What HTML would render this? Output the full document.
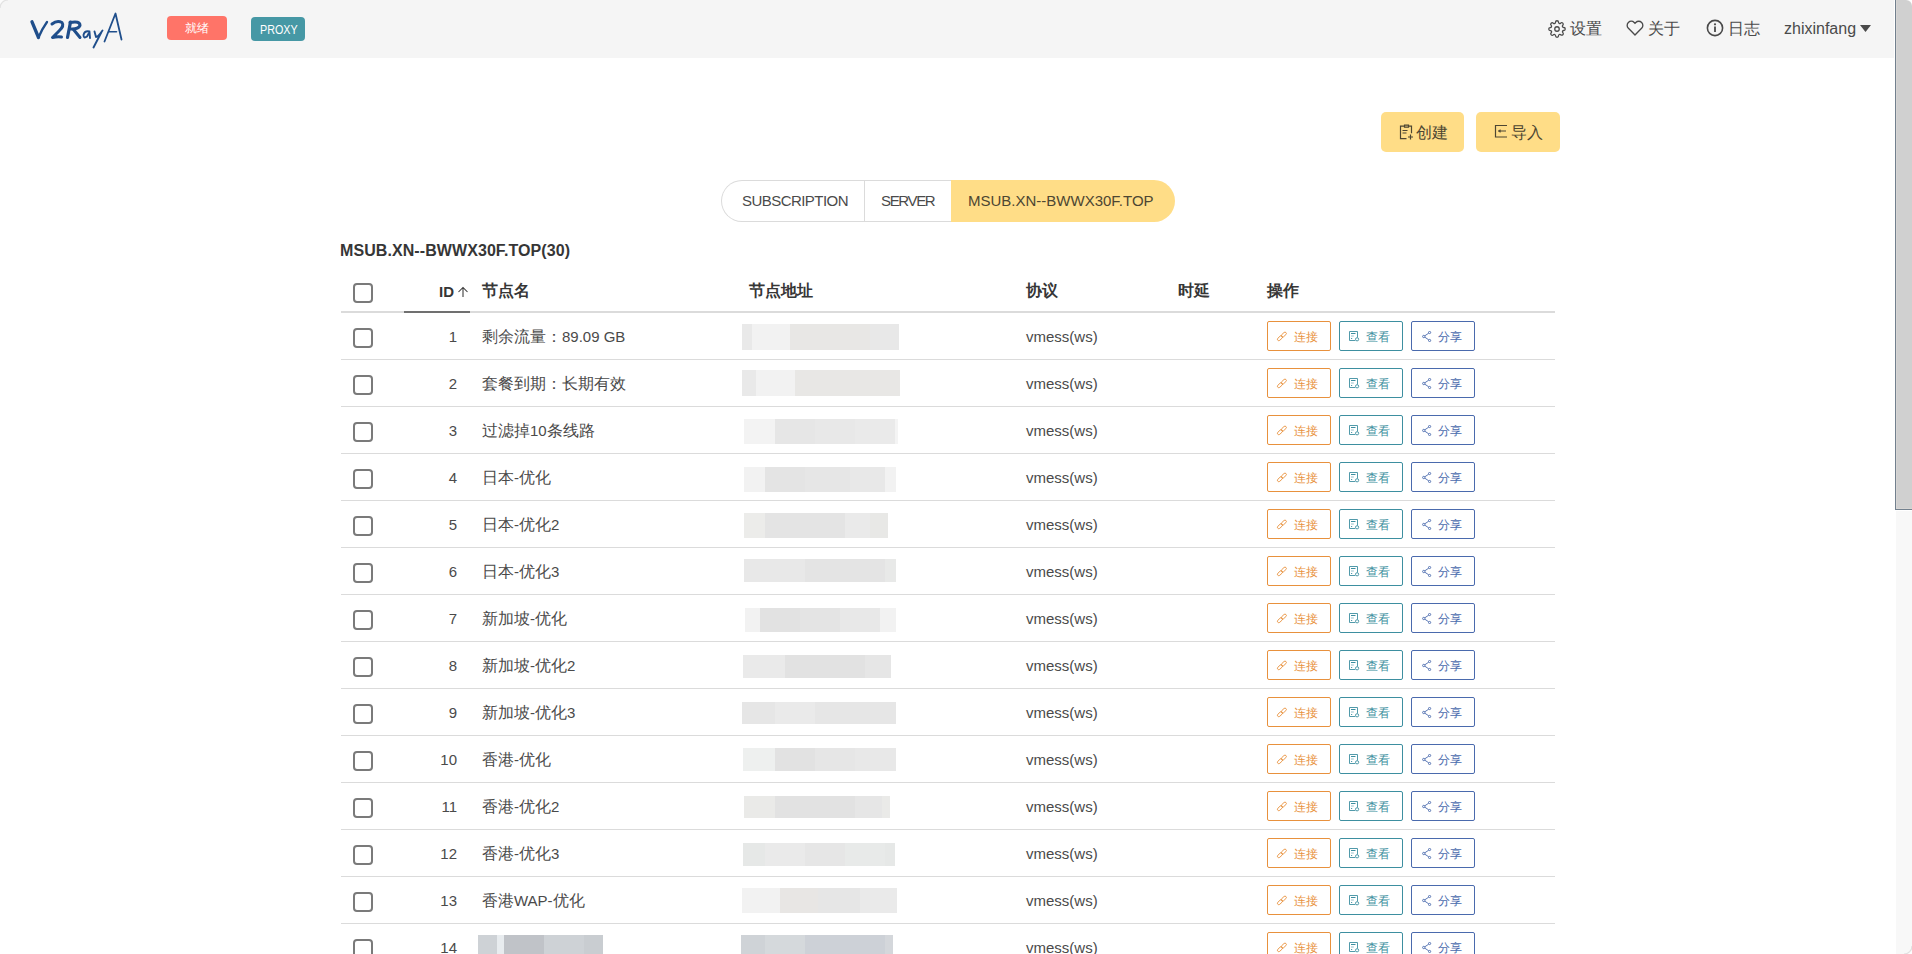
<!DOCTYPE html><html><head><meta charset="utf-8"><style>
*{box-sizing:border-box;margin:0;padding:0}
html,body{width:1912px;height:954px;overflow:hidden;background:#fff;font-family:"Liberation Sans",sans-serif;color:#4a4a4a}
.abs{position:absolute}
#hdr{position:absolute;left:0;top:0;width:1894px;height:58px;background:#f5f5f5}
.corner{position:absolute;left:0;top:0;width:14px;height:14px;border-top-left-radius:7px;border-left:1px solid #e4e4e4;border-top:1px solid #e4e4e4}
.tag{position:absolute;height:24px;border-radius:4px;color:#fff;font-size:12px;line-height:24px;text-align:center}
.nav{position:absolute;top:19px;font-size:16px;line-height:20px;color:#4a4a4a;white-space:nowrap}
.sbw{position:absolute;left:1894px;top:0;width:18px;height:954px;background:#fff}
.track{position:absolute;left:1896px;top:511px;width:16px;height:443px;background:#f8f8f8;border-bottom-right-radius:7px}
.thumb{position:absolute;left:1895px;top:0;width:17px;height:510px;background:#d0d0d0;border-left:1px solid #72808e;border-bottom:1px solid #72808e;border-top-right-radius:6px;box-shadow:inset 1px -1px 0 #d8d6d4}
.ybtn{position:absolute;top:112px;height:40px;background:#ffdd87;border-radius:5px;color:#4d4632;font-size:16px;line-height:40px}
.tabs{position:absolute;left:721px;top:180px;height:42px;width:260px;border:1px solid #dbdbdb;border-right:none;border-radius:21px 0 0 21px}
.tab{position:absolute;top:0;height:40px;line-height:40px;font-size:15px;color:#4a4a4a;white-space:nowrap}
.tabact{position:absolute;left:951px;top:180px;width:224px;height:42px;background:#ffdd87;border-radius:0 21px 21px 0;color:#4d4632;font-size:15px;line-height:42px;white-space:nowrap}
.title{position:absolute;left:340px;top:241px;letter-spacing:0.08px;font-size:16px;font-weight:bold;color:#363636;line-height:20px;white-space:nowrap}
.th{position:absolute;top:281px;font-size:16px;font-weight:bold;color:#363636;line-height:20px;white-space:nowrap}
.hline{position:absolute;left:341px;top:311px;width:1214px;height:2px;background:#dbdbdb}
.sortline{position:absolute;left:404px;top:311px;width:66px;height:2px;background:#707070}
.row{position:absolute;left:341px;width:1214px;height:47px;border-bottom:1px solid #dbdbdb}
.cb{position:absolute;left:12px;width:20px;height:20px;border:2px solid #7a7a7a;border-radius:4px;background:#fff}
.id{position:absolute;right:1098px;font-size:15px;line-height:20px;color:#4a4a4a;text-align:right}
.nm{position:absolute;left:141px;font-size:15px;line-height:20px;color:#4a4a4a;white-space:nowrap}
.cj{font-size:16px}
.pr{position:absolute;left:685px;font-size:15px;line-height:20px;color:#4a4a4a}
.bl{position:absolute}
.btn{position:absolute;top:8px;width:64px;height:30px;border:1px solid;border-radius:2px;font-size:12px;line-height:28px;background:#fff;white-space:nowrap}
.b1{left:926px;border-color:#e8913d;color:#e8913d}
.b2{left:998px;border-color:#3d8fa0;color:#3d8fa0}
.b3{left:1070px;border-color:#4a6aad;color:#4a6aad}
.btn svg{position:absolute}
.btn span{position:absolute;left:26px;top:1px}
</style></head><body>
<div id="hdr"></div><svg class="abs" style="left:0;top:0" width="10" height="10" viewBox="0 0 10 10"><path d="M0 0H8A8 8 0 0 0 0 8z" fill="#fbfbfb"/><path d="M0 8A8 8 0 0 1 8 0" fill="none" stroke="#e2e2e2" stroke-width="1.2"/></svg>
<svg class="abs" style="left:28px;top:10px" width="100" height="42" viewBox="0 0 100 42">
<g fill="none" stroke="#1f4e8b" stroke-linecap="round" stroke-linejoin="round">
<path d="M4 11.8 Q7 19 10.5 27.5" stroke-width="3.3"/><path d="M10.5 27.5 Q14 19 19 12" stroke-width="2.3"/>
<path d="M24 14 Q29 10 34 12.5 Q36.5 16 31 21 L24.5 27.5 Q29 26.5 33.5 27" stroke-width="3"/>
<path d="M42.5 12 L39.5 27.5" stroke-width="3.2"/>
<path d="M42 12.5 Q52 10.5 52 15.5 Q50 19.5 43 19" stroke-width="3"/>
<path d="M45.5 19.5 L52 27.5" stroke-width="3"/>
<path d="M61.5 21.5 Q56.5 20.5 55.5 25 Q55.5 29 59 26.5 L61.5 22 L62 28" stroke-width="1.9"/>
<path d="M66.5 21.5 L68 27 Q70 27 74.5 20.5 M73.5 22 L65.5 37.5" stroke-width="1.9"/>
<path d="M76.5 31.5 L87.5 3.5 L93.5 29.5" stroke-width="1.8"/>
<path d="M81 21.7 L88.5 21.7" stroke-width="1.6"/>
</g></svg>
<div class="tag" style="left:167px;top:16px;width:60px;background:#ff7468;line-height:25px">就绪</div>
<div class="tag" style="left:251px;top:17px;width:54px;background:#4698a5;font-size:12.5px;line-height:26px;padding-left:2px"><span style="display:inline-block;transform:scaleX(0.86)">PROXY</span></div>
<div class="nav" style="left:1570px"><svg width="18" height="18" viewBox="0 0 24 24" style="position:absolute;left:-22px;top:1px" fill="none" stroke="#4a4a4a" stroke-width="1.7"><circle cx="12" cy="12" r="3"/><path d="M19.4 15a1.65 1.65 0 0 0 .33 1.82l.06.06a2 2 0 1 1-2.83 2.830l-.06-.06a1.65 1.65 0 0 0-1.82-.33 1.65 1.65 0 0 0-1 1.51V21a2 2 0 1 1-4 0v-.09A1.65 1.65 0 0 0 9 19.4a1.65 1.65 0 0 0-1.82.33l-.06.06a2 2 0 1 1-2.83-2.83l.06-.06a1.65 1.65 0 0 0 .33-1.82 1.65 1.65 0 0 0-1.51-1H3a2 2 0 1 1 0-4h.09A1.65 1.65 0 0 0 4.6 9a1.65 1.65 0 0 0-.33-1.82l-.06-.06a2 2 0 1 1 2.83-2.83l.06.06a1.65 1.65 0 0 0 1.82.33H9a1.65 1.65 0 0 0 1-1.51V3a2 2 0 1 1 4 0v.09a1.65 1.65 0 0 0 1 1.51 1.65 1.65 0 0 0 1.82-.33l.06-.06a2 2 0 1 1 2.83 2.83l-.06.06a1.65 1.65 0 0 0-.33 1.82V9a1.65 1.65 0 0 0 1.51 1H21a2 2 0 1 1 0 4h-.09a1.65 1.65 0 0 0-1.51 1z"/></svg>设置</div>
<div class="nav" style="left:1648px"><svg width="18" height="18" viewBox="0 0 24 24" style="position:absolute;left:-22px;top:0px" fill="none" stroke="#4a4a4a" stroke-width="1.8"><path d="M20.84 4.61a5.5 5.5 0 0 0-7.78 0L12 5.67l-1.06-1.06a5.5 5.5 0 0 0-7.78 7.78l1.06 1.06L12 21.23l7.78-7.780 1.06-1.06a5.5 5.5 0 0 0 0-7.78z"/></svg>关于</div>
<div class="nav" style="left:1728px"><svg width="18" height="18" viewBox="0 0 18 18" style="position:absolute;left:-22px;top:0px" fill="none" stroke="#4a4a4a"><circle cx="9" cy="9" r="7.6" stroke-width="1.6"/><circle cx="9" cy="5.3" r="1.1" fill="#4a4a4a" stroke="none"/><path d="M9 7.5v5.5" stroke-width="1.8"/></svg>日志</div>
<div class="nav" style="left:1784px">zhixinfang<svg width="12" height="8" viewBox="0 0 12 8" style="position:absolute;left:76px;top:6px"><path d="M0 0H11L5.5 7z" fill="#4a4a4a"/></svg></div>
<div class="sbw"></div><div class="track"></div><div class="thumb"></div>
<div class="ybtn" style="left:1381px;width:83px"><svg width="15" height="16" viewBox="0 0 15 16" style="position:absolute;left:18px;top:12px" fill="none" stroke="#4d4632" stroke-width="1.2"><path d="M5.5 1.2h4v2h-4z M5.5 2.2H1.5v12.5h6 M9.5 2.2h3v7 M3.5 6.5h5 M3.5 9h4 M11.5 10.5v5 M9 13h5"/></svg><span style="position:absolute;left:35px;top:1px">创建</span></div>
<div class="ybtn" style="left:1476px;width:84px"><svg width="15" height="16" viewBox="0 0 15 16" style="position:absolute;left:18px;top:12px" fill="none" stroke="#4d4632" stroke-width="1.2"><path d="M13 1.5H1.5v11.5H13 M4.5 7h7.5"/><path d="M4.3 7l2-1.3v2.6z" fill="#4d4632" stroke-width="0.6"/></svg><span style="position:absolute;left:35px;top:1px">导入</span></div>
<div class="tabs"><div class="tab" style="left:20px;font-size:15px;letter-spacing:-0.55px">SUBSCRIPTION</div><div style="position:absolute;left:142px;top:0;width:1px;height:40px;background:#dbdbdb"></div><div class="tab" style="left:159px;letter-spacing:-1.35px">SERVER</div></div>
<div class="tabact"><span style="position:absolute;left:17px;top:0">MSUB.XN--BWWX30F.TOP</span></div>
<div class="title">MSUB.XN--BWWX30F.TOP(30)</div>
<div class="cb abs" style="left:353px;top:283px"></div>
<div class="th" style="left:439px;font-size:15px;top:282px">ID</div>
<svg class="abs" style="left:457px;top:286px" width="12" height="12" viewBox="0 0 12 12" fill="none" stroke="#363636" stroke-width="1.05"><path d="M6 11V1.5 M1.5 6L6 1.5L10.5 6"/></svg>
<div class="th" style="left:482px">节点名</div>
<div class="th" style="left:749px">节点地址</div>
<div class="th" style="left:1026px">协议</div>
<div class="th" style="left:1178px">时延</div>
<div class="th" style="left:1267px">操作</div>
<div class="hline"></div><div class="sortline"></div>
<div class="row" style="top:313px">
<div class="cb" style="top:15px"></div>
<div class="id" style="top:14px">1</div>
<div class="nm" style="top:14px"><span class="cj">剩余流量：</span>89.09 GB</div>
<div class="pr" style="top:14px">vmess(ws)</div>
<div class="btn b1"><svg style="left:8px;top:9px" width="12" height="12" viewBox="0 0 12 12" fill="none" stroke="currentColor" stroke-width="0.85"><g transform="rotate(-43 5.9 5.4)"><rect x="0.3" y="4" width="6" height="2.8" rx="1.4"/><rect x="5.5" y="4" width="6" height="2.8" rx="1.4"/></g></svg><span>连接</span></div>
<div class="btn b2"><svg style="left:9px;top:9px" width="12" height="12" viewBox="0 0 12 12" fill="none" stroke="currentColor" stroke-width="0.9"><path d="M6.3 9.5H0.5V0.5h8v6"/><path d="M2 2.5h4.5" stroke-width="1"/><path d="M2 5h2.8" opacity=".45" stroke-width="1.2"/><path d="M2 7.5h1.2"/><circle cx="8.1" cy="8.3" r="1.6"/></svg><span>查看</span></div>
<div class="btn b3"><svg style="left:10px;top:9px" width="11" height="11" viewBox="0 0 11 11" fill="none" stroke="currentColor" stroke-width="0.9"><circle cx="1.8" cy="5.5" r="1.2"/><circle cx="7.6" cy="1.5" r="1.1"/><circle cx="7.6" cy="9.5" r="1.1"/><path d="M2.8 4.8l3.9-2.6 M2.8 6.2l3.9 2.6"/></svg><span>分享</span></div>
</div>
<div class="row" style="top:360px">
<div class="cb" style="top:15px"></div>
<div class="id" style="top:14px">2</div>
<div class="nm" style="top:14px"><span class="cj">套餐到期：长期有效</span></div>
<div class="pr" style="top:14px">vmess(ws)</div>
<div class="btn b1"><svg style="left:8px;top:9px" width="12" height="12" viewBox="0 0 12 12" fill="none" stroke="currentColor" stroke-width="0.85"><g transform="rotate(-43 5.9 5.4)"><rect x="0.3" y="4" width="6" height="2.8" rx="1.4"/><rect x="5.5" y="4" width="6" height="2.8" rx="1.4"/></g></svg><span>连接</span></div>
<div class="btn b2"><svg style="left:9px;top:9px" width="12" height="12" viewBox="0 0 12 12" fill="none" stroke="currentColor" stroke-width="0.9"><path d="M6.3 9.5H0.5V0.5h8v6"/><path d="M2 2.5h4.5" stroke-width="1"/><path d="M2 5h2.8" opacity=".45" stroke-width="1.2"/><path d="M2 7.5h1.2"/><circle cx="8.1" cy="8.3" r="1.6"/></svg><span>查看</span></div>
<div class="btn b3"><svg style="left:10px;top:9px" width="11" height="11" viewBox="0 0 11 11" fill="none" stroke="currentColor" stroke-width="0.9"><circle cx="1.8" cy="5.5" r="1.2"/><circle cx="7.6" cy="1.5" r="1.1"/><circle cx="7.6" cy="9.5" r="1.1"/><path d="M2.8 4.8l3.9-2.6 M2.8 6.2l3.9 2.6"/></svg><span>分享</span></div>
</div>
<div class="row" style="top:407px">
<div class="cb" style="top:15px"></div>
<div class="id" style="top:14px">3</div>
<div class="nm" style="top:14px"><span class="cj">过滤掉</span>10<span class="cj">条线路</span></div>
<div class="pr" style="top:14px">vmess(ws)</div>
<div class="btn b1"><svg style="left:8px;top:9px" width="12" height="12" viewBox="0 0 12 12" fill="none" stroke="currentColor" stroke-width="0.85"><g transform="rotate(-43 5.9 5.4)"><rect x="0.3" y="4" width="6" height="2.8" rx="1.4"/><rect x="5.5" y="4" width="6" height="2.8" rx="1.4"/></g></svg><span>连接</span></div>
<div class="btn b2"><svg style="left:9px;top:9px" width="12" height="12" viewBox="0 0 12 12" fill="none" stroke="currentColor" stroke-width="0.9"><path d="M6.3 9.5H0.5V0.5h8v6"/><path d="M2 2.5h4.5" stroke-width="1"/><path d="M2 5h2.8" opacity=".45" stroke-width="1.2"/><path d="M2 7.5h1.2"/><circle cx="8.1" cy="8.3" r="1.6"/></svg><span>查看</span></div>
<div class="btn b3"><svg style="left:10px;top:9px" width="11" height="11" viewBox="0 0 11 11" fill="none" stroke="currentColor" stroke-width="0.9"><circle cx="1.8" cy="5.5" r="1.2"/><circle cx="7.6" cy="1.5" r="1.1"/><circle cx="7.6" cy="9.5" r="1.1"/><path d="M2.8 4.8l3.9-2.6 M2.8 6.2l3.9 2.6"/></svg><span>分享</span></div>
</div>
<div class="row" style="top:454px">
<div class="cb" style="top:15px"></div>
<div class="id" style="top:14px">4</div>
<div class="nm" style="top:14px"><span class="cj">日本</span>-<span class="cj">优化</span></div>
<div class="pr" style="top:14px">vmess(ws)</div>
<div class="btn b1"><svg style="left:8px;top:9px" width="12" height="12" viewBox="0 0 12 12" fill="none" stroke="currentColor" stroke-width="0.85"><g transform="rotate(-43 5.9 5.4)"><rect x="0.3" y="4" width="6" height="2.8" rx="1.4"/><rect x="5.5" y="4" width="6" height="2.8" rx="1.4"/></g></svg><span>连接</span></div>
<div class="btn b2"><svg style="left:9px;top:9px" width="12" height="12" viewBox="0 0 12 12" fill="none" stroke="currentColor" stroke-width="0.9"><path d="M6.3 9.5H0.5V0.5h8v6"/><path d="M2 2.5h4.5" stroke-width="1"/><path d="M2 5h2.8" opacity=".45" stroke-width="1.2"/><path d="M2 7.5h1.2"/><circle cx="8.1" cy="8.3" r="1.6"/></svg><span>查看</span></div>
<div class="btn b3"><svg style="left:10px;top:9px" width="11" height="11" viewBox="0 0 11 11" fill="none" stroke="currentColor" stroke-width="0.9"><circle cx="1.8" cy="5.5" r="1.2"/><circle cx="7.6" cy="1.5" r="1.1"/><circle cx="7.6" cy="9.5" r="1.1"/><path d="M2.8 4.8l3.9-2.6 M2.8 6.2l3.9 2.6"/></svg><span>分享</span></div>
</div>
<div class="row" style="top:501px">
<div class="cb" style="top:15px"></div>
<div class="id" style="top:14px">5</div>
<div class="nm" style="top:14px"><span class="cj">日本</span>-<span class="cj">优化</span>2</div>
<div class="pr" style="top:14px">vmess(ws)</div>
<div class="btn b1"><svg style="left:8px;top:9px" width="12" height="12" viewBox="0 0 12 12" fill="none" stroke="currentColor" stroke-width="0.85"><g transform="rotate(-43 5.9 5.4)"><rect x="0.3" y="4" width="6" height="2.8" rx="1.4"/><rect x="5.5" y="4" width="6" height="2.8" rx="1.4"/></g></svg><span>连接</span></div>
<div class="btn b2"><svg style="left:9px;top:9px" width="12" height="12" viewBox="0 0 12 12" fill="none" stroke="currentColor" stroke-width="0.9"><path d="M6.3 9.5H0.5V0.5h8v6"/><path d="M2 2.5h4.5" stroke-width="1"/><path d="M2 5h2.8" opacity=".45" stroke-width="1.2"/><path d="M2 7.5h1.2"/><circle cx="8.1" cy="8.3" r="1.6"/></svg><span>查看</span></div>
<div class="btn b3"><svg style="left:10px;top:9px" width="11" height="11" viewBox="0 0 11 11" fill="none" stroke="currentColor" stroke-width="0.9"><circle cx="1.8" cy="5.5" r="1.2"/><circle cx="7.6" cy="1.5" r="1.1"/><circle cx="7.6" cy="9.5" r="1.1"/><path d="M2.8 4.8l3.9-2.6 M2.8 6.2l3.9 2.6"/></svg><span>分享</span></div>
</div>
<div class="row" style="top:548px">
<div class="cb" style="top:15px"></div>
<div class="id" style="top:14px">6</div>
<div class="nm" style="top:14px"><span class="cj">日本</span>-<span class="cj">优化</span>3</div>
<div class="pr" style="top:14px">vmess(ws)</div>
<div class="btn b1"><svg style="left:8px;top:9px" width="12" height="12" viewBox="0 0 12 12" fill="none" stroke="currentColor" stroke-width="0.85"><g transform="rotate(-43 5.9 5.4)"><rect x="0.3" y="4" width="6" height="2.8" rx="1.4"/><rect x="5.5" y="4" width="6" height="2.8" rx="1.4"/></g></svg><span>连接</span></div>
<div class="btn b2"><svg style="left:9px;top:9px" width="12" height="12" viewBox="0 0 12 12" fill="none" stroke="currentColor" stroke-width="0.9"><path d="M6.3 9.5H0.5V0.5h8v6"/><path d="M2 2.5h4.5" stroke-width="1"/><path d="M2 5h2.8" opacity=".45" stroke-width="1.2"/><path d="M2 7.5h1.2"/><circle cx="8.1" cy="8.3" r="1.6"/></svg><span>查看</span></div>
<div class="btn b3"><svg style="left:10px;top:9px" width="11" height="11" viewBox="0 0 11 11" fill="none" stroke="currentColor" stroke-width="0.9"><circle cx="1.8" cy="5.5" r="1.2"/><circle cx="7.6" cy="1.5" r="1.1"/><circle cx="7.6" cy="9.5" r="1.1"/><path d="M2.8 4.8l3.9-2.6 M2.8 6.2l3.9 2.6"/></svg><span>分享</span></div>
</div>
<div class="row" style="top:595px">
<div class="cb" style="top:15px"></div>
<div class="id" style="top:14px">7</div>
<div class="nm" style="top:14px"><span class="cj">新加坡</span>-<span class="cj">优化</span></div>
<div class="pr" style="top:14px">vmess(ws)</div>
<div class="btn b1"><svg style="left:8px;top:9px" width="12" height="12" viewBox="0 0 12 12" fill="none" stroke="currentColor" stroke-width="0.85"><g transform="rotate(-43 5.9 5.4)"><rect x="0.3" y="4" width="6" height="2.8" rx="1.4"/><rect x="5.5" y="4" width="6" height="2.8" rx="1.4"/></g></svg><span>连接</span></div>
<div class="btn b2"><svg style="left:9px;top:9px" width="12" height="12" viewBox="0 0 12 12" fill="none" stroke="currentColor" stroke-width="0.9"><path d="M6.3 9.5H0.5V0.5h8v6"/><path d="M2 2.5h4.5" stroke-width="1"/><path d="M2 5h2.8" opacity=".45" stroke-width="1.2"/><path d="M2 7.5h1.2"/><circle cx="8.1" cy="8.3" r="1.6"/></svg><span>查看</span></div>
<div class="btn b3"><svg style="left:10px;top:9px" width="11" height="11" viewBox="0 0 11 11" fill="none" stroke="currentColor" stroke-width="0.9"><circle cx="1.8" cy="5.5" r="1.2"/><circle cx="7.6" cy="1.5" r="1.1"/><circle cx="7.6" cy="9.5" r="1.1"/><path d="M2.8 4.8l3.9-2.6 M2.8 6.2l3.9 2.6"/></svg><span>分享</span></div>
</div>
<div class="row" style="top:642px">
<div class="cb" style="top:15px"></div>
<div class="id" style="top:14px">8</div>
<div class="nm" style="top:14px"><span class="cj">新加坡</span>-<span class="cj">优化</span>2</div>
<div class="pr" style="top:14px">vmess(ws)</div>
<div class="btn b1"><svg style="left:8px;top:9px" width="12" height="12" viewBox="0 0 12 12" fill="none" stroke="currentColor" stroke-width="0.85"><g transform="rotate(-43 5.9 5.4)"><rect x="0.3" y="4" width="6" height="2.8" rx="1.4"/><rect x="5.5" y="4" width="6" height="2.8" rx="1.4"/></g></svg><span>连接</span></div>
<div class="btn b2"><svg style="left:9px;top:9px" width="12" height="12" viewBox="0 0 12 12" fill="none" stroke="currentColor" stroke-width="0.9"><path d="M6.3 9.5H0.5V0.5h8v6"/><path d="M2 2.5h4.5" stroke-width="1"/><path d="M2 5h2.8" opacity=".45" stroke-width="1.2"/><path d="M2 7.5h1.2"/><circle cx="8.1" cy="8.3" r="1.6"/></svg><span>查看</span></div>
<div class="btn b3"><svg style="left:10px;top:9px" width="11" height="11" viewBox="0 0 11 11" fill="none" stroke="currentColor" stroke-width="0.9"><circle cx="1.8" cy="5.5" r="1.2"/><circle cx="7.6" cy="1.5" r="1.1"/><circle cx="7.6" cy="9.5" r="1.1"/><path d="M2.8 4.8l3.9-2.6 M2.8 6.2l3.9 2.6"/></svg><span>分享</span></div>
</div>
<div class="row" style="top:689px">
<div class="cb" style="top:15px"></div>
<div class="id" style="top:14px">9</div>
<div class="nm" style="top:14px"><span class="cj">新加坡</span>-<span class="cj">优化</span>3</div>
<div class="pr" style="top:14px">vmess(ws)</div>
<div class="btn b1"><svg style="left:8px;top:9px" width="12" height="12" viewBox="0 0 12 12" fill="none" stroke="currentColor" stroke-width="0.85"><g transform="rotate(-43 5.9 5.4)"><rect x="0.3" y="4" width="6" height="2.8" rx="1.4"/><rect x="5.5" y="4" width="6" height="2.8" rx="1.4"/></g></svg><span>连接</span></div>
<div class="btn b2"><svg style="left:9px;top:9px" width="12" height="12" viewBox="0 0 12 12" fill="none" stroke="currentColor" stroke-width="0.9"><path d="M6.3 9.5H0.5V0.5h8v6"/><path d="M2 2.5h4.5" stroke-width="1"/><path d="M2 5h2.8" opacity=".45" stroke-width="1.2"/><path d="M2 7.5h1.2"/><circle cx="8.1" cy="8.3" r="1.6"/></svg><span>查看</span></div>
<div class="btn b3"><svg style="left:10px;top:9px" width="11" height="11" viewBox="0 0 11 11" fill="none" stroke="currentColor" stroke-width="0.9"><circle cx="1.8" cy="5.5" r="1.2"/><circle cx="7.6" cy="1.5" r="1.1"/><circle cx="7.6" cy="9.5" r="1.1"/><path d="M2.8 4.8l3.9-2.6 M2.8 6.2l3.9 2.6"/></svg><span>分享</span></div>
</div>
<div class="row" style="top:736px">
<div class="cb" style="top:15px"></div>
<div class="id" style="top:14px">10</div>
<div class="nm" style="top:14px"><span class="cj">香港</span>-<span class="cj">优化</span></div>
<div class="pr" style="top:14px">vmess(ws)</div>
<div class="btn b1"><svg style="left:8px;top:9px" width="12" height="12" viewBox="0 0 12 12" fill="none" stroke="currentColor" stroke-width="0.85"><g transform="rotate(-43 5.9 5.4)"><rect x="0.3" y="4" width="6" height="2.8" rx="1.4"/><rect x="5.5" y="4" width="6" height="2.8" rx="1.4"/></g></svg><span>连接</span></div>
<div class="btn b2"><svg style="left:9px;top:9px" width="12" height="12" viewBox="0 0 12 12" fill="none" stroke="currentColor" stroke-width="0.9"><path d="M6.3 9.5H0.5V0.5h8v6"/><path d="M2 2.5h4.5" stroke-width="1"/><path d="M2 5h2.8" opacity=".45" stroke-width="1.2"/><path d="M2 7.5h1.2"/><circle cx="8.1" cy="8.3" r="1.6"/></svg><span>查看</span></div>
<div class="btn b3"><svg style="left:10px;top:9px" width="11" height="11" viewBox="0 0 11 11" fill="none" stroke="currentColor" stroke-width="0.9"><circle cx="1.8" cy="5.5" r="1.2"/><circle cx="7.6" cy="1.5" r="1.1"/><circle cx="7.6" cy="9.5" r="1.1"/><path d="M2.8 4.8l3.9-2.6 M2.8 6.2l3.9 2.6"/></svg><span>分享</span></div>
</div>
<div class="row" style="top:783px">
<div class="cb" style="top:15px"></div>
<div class="id" style="top:14px">11</div>
<div class="nm" style="top:14px"><span class="cj">香港</span>-<span class="cj">优化</span>2</div>
<div class="pr" style="top:14px">vmess(ws)</div>
<div class="btn b1"><svg style="left:8px;top:9px" width="12" height="12" viewBox="0 0 12 12" fill="none" stroke="currentColor" stroke-width="0.85"><g transform="rotate(-43 5.9 5.4)"><rect x="0.3" y="4" width="6" height="2.8" rx="1.4"/><rect x="5.5" y="4" width="6" height="2.8" rx="1.4"/></g></svg><span>连接</span></div>
<div class="btn b2"><svg style="left:9px;top:9px" width="12" height="12" viewBox="0 0 12 12" fill="none" stroke="currentColor" stroke-width="0.9"><path d="M6.3 9.5H0.5V0.5h8v6"/><path d="M2 2.5h4.5" stroke-width="1"/><path d="M2 5h2.8" opacity=".45" stroke-width="1.2"/><path d="M2 7.5h1.2"/><circle cx="8.1" cy="8.3" r="1.6"/></svg><span>查看</span></div>
<div class="btn b3"><svg style="left:10px;top:9px" width="11" height="11" viewBox="0 0 11 11" fill="none" stroke="currentColor" stroke-width="0.9"><circle cx="1.8" cy="5.5" r="1.2"/><circle cx="7.6" cy="1.5" r="1.1"/><circle cx="7.6" cy="9.5" r="1.1"/><path d="M2.8 4.8l3.9-2.6 M2.8 6.2l3.9 2.6"/></svg><span>分享</span></div>
</div>
<div class="row" style="top:830px">
<div class="cb" style="top:15px"></div>
<div class="id" style="top:14px">12</div>
<div class="nm" style="top:14px"><span class="cj">香港</span>-<span class="cj">优化</span>3</div>
<div class="pr" style="top:14px">vmess(ws)</div>
<div class="btn b1"><svg style="left:8px;top:9px" width="12" height="12" viewBox="0 0 12 12" fill="none" stroke="currentColor" stroke-width="0.85"><g transform="rotate(-43 5.9 5.4)"><rect x="0.3" y="4" width="6" height="2.8" rx="1.4"/><rect x="5.5" y="4" width="6" height="2.8" rx="1.4"/></g></svg><span>连接</span></div>
<div class="btn b2"><svg style="left:9px;top:9px" width="12" height="12" viewBox="0 0 12 12" fill="none" stroke="currentColor" stroke-width="0.9"><path d="M6.3 9.5H0.5V0.5h8v6"/><path d="M2 2.5h4.5" stroke-width="1"/><path d="M2 5h2.8" opacity=".45" stroke-width="1.2"/><path d="M2 7.5h1.2"/><circle cx="8.1" cy="8.3" r="1.6"/></svg><span>查看</span></div>
<div class="btn b3"><svg style="left:10px;top:9px" width="11" height="11" viewBox="0 0 11 11" fill="none" stroke="currentColor" stroke-width="0.9"><circle cx="1.8" cy="5.5" r="1.2"/><circle cx="7.6" cy="1.5" r="1.1"/><circle cx="7.6" cy="9.5" r="1.1"/><path d="M2.8 4.8l3.9-2.6 M2.8 6.2l3.9 2.6"/></svg><span>分享</span></div>
</div>
<div class="row" style="top:877px">
<div class="cb" style="top:15px"></div>
<div class="id" style="top:14px">13</div>
<div class="nm" style="top:14px"><span class="cj">香港</span>WAP-<span class="cj">优化</span></div>
<div class="pr" style="top:14px">vmess(ws)</div>
<div class="btn b1"><svg style="left:8px;top:9px" width="12" height="12" viewBox="0 0 12 12" fill="none" stroke="currentColor" stroke-width="0.85"><g transform="rotate(-43 5.9 5.4)"><rect x="0.3" y="4" width="6" height="2.8" rx="1.4"/><rect x="5.5" y="4" width="6" height="2.8" rx="1.4"/></g></svg><span>连接</span></div>
<div class="btn b2"><svg style="left:9px;top:9px" width="12" height="12" viewBox="0 0 12 12" fill="none" stroke="currentColor" stroke-width="0.9"><path d="M6.3 9.5H0.5V0.5h8v6"/><path d="M2 2.5h4.5" stroke-width="1"/><path d="M2 5h2.8" opacity=".45" stroke-width="1.2"/><path d="M2 7.5h1.2"/><circle cx="8.1" cy="8.3" r="1.6"/></svg><span>查看</span></div>
<div class="btn b3"><svg style="left:10px;top:9px" width="11" height="11" viewBox="0 0 11 11" fill="none" stroke="currentColor" stroke-width="0.9"><circle cx="1.8" cy="5.5" r="1.2"/><circle cx="7.6" cy="1.5" r="1.1"/><circle cx="7.6" cy="9.5" r="1.1"/><path d="M2.8 4.8l3.9-2.6 M2.8 6.2l3.9 2.6"/></svg><span>分享</span></div>
</div>
<div class="row" style="top:924px">
<div class="cb" style="top:15px"></div>
<div class="id" style="top:14px">14</div>
<div class="pr" style="top:14px">vmess(ws)</div>
<div class="btn b1"><svg style="left:8px;top:9px" width="12" height="12" viewBox="0 0 12 12" fill="none" stroke="currentColor" stroke-width="0.85"><g transform="rotate(-43 5.9 5.4)"><rect x="0.3" y="4" width="6" height="2.8" rx="1.4"/><rect x="5.5" y="4" width="6" height="2.8" rx="1.4"/></g></svg><span>连接</span></div>
<div class="btn b2"><svg style="left:9px;top:9px" width="12" height="12" viewBox="0 0 12 12" fill="none" stroke="currentColor" stroke-width="0.9"><path d="M6.3 9.5H0.5V0.5h8v6"/><path d="M2 2.5h4.5" stroke-width="1"/><path d="M2 5h2.8" opacity=".45" stroke-width="1.2"/><path d="M2 7.5h1.2"/><circle cx="8.1" cy="8.3" r="1.6"/></svg><span>查看</span></div>
<div class="btn b3"><svg style="left:10px;top:9px" width="11" height="11" viewBox="0 0 11 11" fill="none" stroke="currentColor" stroke-width="0.9"><circle cx="1.8" cy="5.5" r="1.2"/><circle cx="7.6" cy="1.5" r="1.1"/><circle cx="7.6" cy="9.5" r="1.1"/><path d="M2.8 4.8l3.9-2.6 M2.8 6.2l3.9 2.6"/></svg><span>分享</span></div>
</div>
<div class="bl" style="left:742px;top:324px;width:10px;height:26px;background:#e9e9e9"></div>
<div class="bl" style="left:752px;top:324px;width:38px;height:26px;background:#f2f2f2"></div>
<div class="bl" style="left:790px;top:324px;width:80px;height:26px;background:#e8e7e5"></div>
<div class="bl" style="left:870px;top:324px;width:29px;height:26px;background:#e8e8e8"></div>
<div class="bl" style="left:742px;top:370px;width:14px;height:26px;background:#e9e9e9"></div>
<div class="bl" style="left:756px;top:370px;width:39px;height:26px;background:#f2f2f2"></div>
<div class="bl" style="left:795px;top:370px;width:105px;height:26px;background:#e8e7e5"></div>
<div class="bl" style="left:744px;top:419px;width:31px;height:25px;background:#f3f3f3"></div>
<div class="bl" style="left:775px;top:419px;width:40px;height:25px;background:#e6e6e6"></div>
<div class="bl" style="left:815px;top:419px;width:40px;height:25px;background:#e8e8e8"></div>
<div class="bl" style="left:855px;top:419px;width:40px;height:25px;background:#eaeaea"></div>
<div class="bl" style="left:895px;top:419px;width:3px;height:25px;background:#f4f4f4"></div>
<div class="bl" style="left:744px;top:467px;width:21px;height:25px;background:#f2f2f2"></div>
<div class="bl" style="left:765px;top:467px;width:40px;height:25px;background:#e4e4e4"></div>
<div class="bl" style="left:805px;top:467px;width:45px;height:25px;background:#e6e6e6"></div>
<div class="bl" style="left:850px;top:467px;width:35px;height:25px;background:#e8e8e8"></div>
<div class="bl" style="left:885px;top:467px;width:11px;height:25px;background:#f2f2f2"></div>
<div class="bl" style="left:744px;top:513px;width:21px;height:25px;background:#ececea"></div>
<div class="bl" style="left:765px;top:513px;width:80px;height:25px;background:#e4e4e4"></div>
<div class="bl" style="left:845px;top:513px;width:25px;height:25px;background:#eaeaea"></div>
<div class="bl" style="left:870px;top:513px;width:18px;height:25px;background:#e8e8e6"></div>
<div class="bl" style="left:744px;top:559px;width:61px;height:23px;background:#e8e8e8"></div>
<div class="bl" style="left:805px;top:559px;width:80px;height:23px;background:#e4e4e4"></div>
<div class="bl" style="left:885px;top:559px;width:11px;height:23px;background:#e8e9e8"></div>
<div class="bl" style="left:745px;top:608px;width:15px;height:24px;background:#f2f2f2"></div>
<div class="bl" style="left:760px;top:608px;width:40px;height:24px;background:#e2e2e2"></div>
<div class="bl" style="left:800px;top:608px;width:40px;height:24px;background:#e4e4e4"></div>
<div class="bl" style="left:840px;top:608px;width:40px;height:24px;background:#e8e8e8"></div>
<div class="bl" style="left:880px;top:608px;width:16px;height:24px;background:#f2f2f2"></div>
<div class="bl" style="left:743px;top:655px;width:42px;height:23px;background:#eaeaea"></div>
<div class="bl" style="left:785px;top:655px;width:80px;height:23px;background:#e2e2e2"></div>
<div class="bl" style="left:865px;top:655px;width:26px;height:23px;background:#e6e6e6"></div>
<div class="bl" style="left:742px;top:702px;width:33px;height:22px;background:#e6e6e6"></div>
<div class="bl" style="left:775px;top:702px;width:40px;height:22px;background:#eaeaea"></div>
<div class="bl" style="left:815px;top:702px;width:81px;height:22px;background:#e6e6e6"></div>
<div class="bl" style="left:743px;top:748px;width:32px;height:23px;background:#eef0ef"></div>
<div class="bl" style="left:775px;top:748px;width:40px;height:23px;background:#e2e2e2"></div>
<div class="bl" style="left:815px;top:748px;width:40px;height:23px;background:#e6e6e6"></div>
<div class="bl" style="left:855px;top:748px;width:41px;height:23px;background:#e8e8e8"></div>
<div class="bl" style="left:744px;top:796px;width:31px;height:22px;background:#eaeae8"></div>
<div class="bl" style="left:775px;top:796px;width:80px;height:22px;background:#e2e2e2"></div>
<div class="bl" style="left:855px;top:796px;width:27px;height:22px;background:#e6e6e6"></div>
<div class="bl" style="left:882px;top:796px;width:8px;height:22px;background:#eaeae8"></div>
<div class="bl" style="left:743px;top:843px;width:22px;height:23px;background:#e6e8e7"></div>
<div class="bl" style="left:765px;top:843px;width:40px;height:23px;background:#eaeaea"></div>
<div class="bl" style="left:805px;top:843px;width:40px;height:23px;background:#e6e6e6"></div>
<div class="bl" style="left:845px;top:843px;width:40px;height:23px;background:#e8eae9"></div>
<div class="bl" style="left:885px;top:843px;width:10px;height:23px;background:#e6e8e7"></div>
<div class="bl" style="left:742px;top:888px;width:38px;height:25px;background:#f2f2f2"></div>
<div class="bl" style="left:780px;top:888px;width:38px;height:25px;background:#e8e6e4"></div>
<div class="bl" style="left:818px;top:888px;width:42px;height:25px;background:#e6e6e6"></div>
<div class="bl" style="left:860px;top:888px;width:37px;height:25px;background:#eaeaea"></div>
<div class="bl" style="left:741px;top:935px;width:24px;height:25px;background:#cfd3d7"></div>
<div class="bl" style="left:765px;top:935px;width:40px;height:25px;background:#d5d9dc"></div>
<div class="bl" style="left:805px;top:935px;width:80px;height:25px;background:#cdd1d7"></div>
<div class="bl" style="left:885px;top:935px;width:8px;height:25px;background:#d4d7db"></div>
<div class="bl" style="left:478px;top:935px;width:19px;height:25px;background:#ced2d6"></div>
<div class="bl" style="left:497px;top:935px;width:7px;height:25px;background:#e8ecef"></div>
<div class="bl" style="left:504px;top:935px;width:40px;height:25px;background:#c0c3c8"></div>
<div class="bl" style="left:544px;top:935px;width:40px;height:25px;background:#ced2d6"></div>
<div class="bl" style="left:584px;top:935px;width:19px;height:25px;background:#c9cdd1"></div>
<svg class="abs" style="left:1902px;top:944px" width="10" height="10" viewBox="0 0 10 10"><path d="M10 0V2A8 8 0 0 1 2 10H10z" fill="#fdfdfd"/><path d="M10 2A8 8 0 0 1 2 10" fill="none" stroke="#e0e0e0" stroke-width="1.2"/></svg>
</body></html>
